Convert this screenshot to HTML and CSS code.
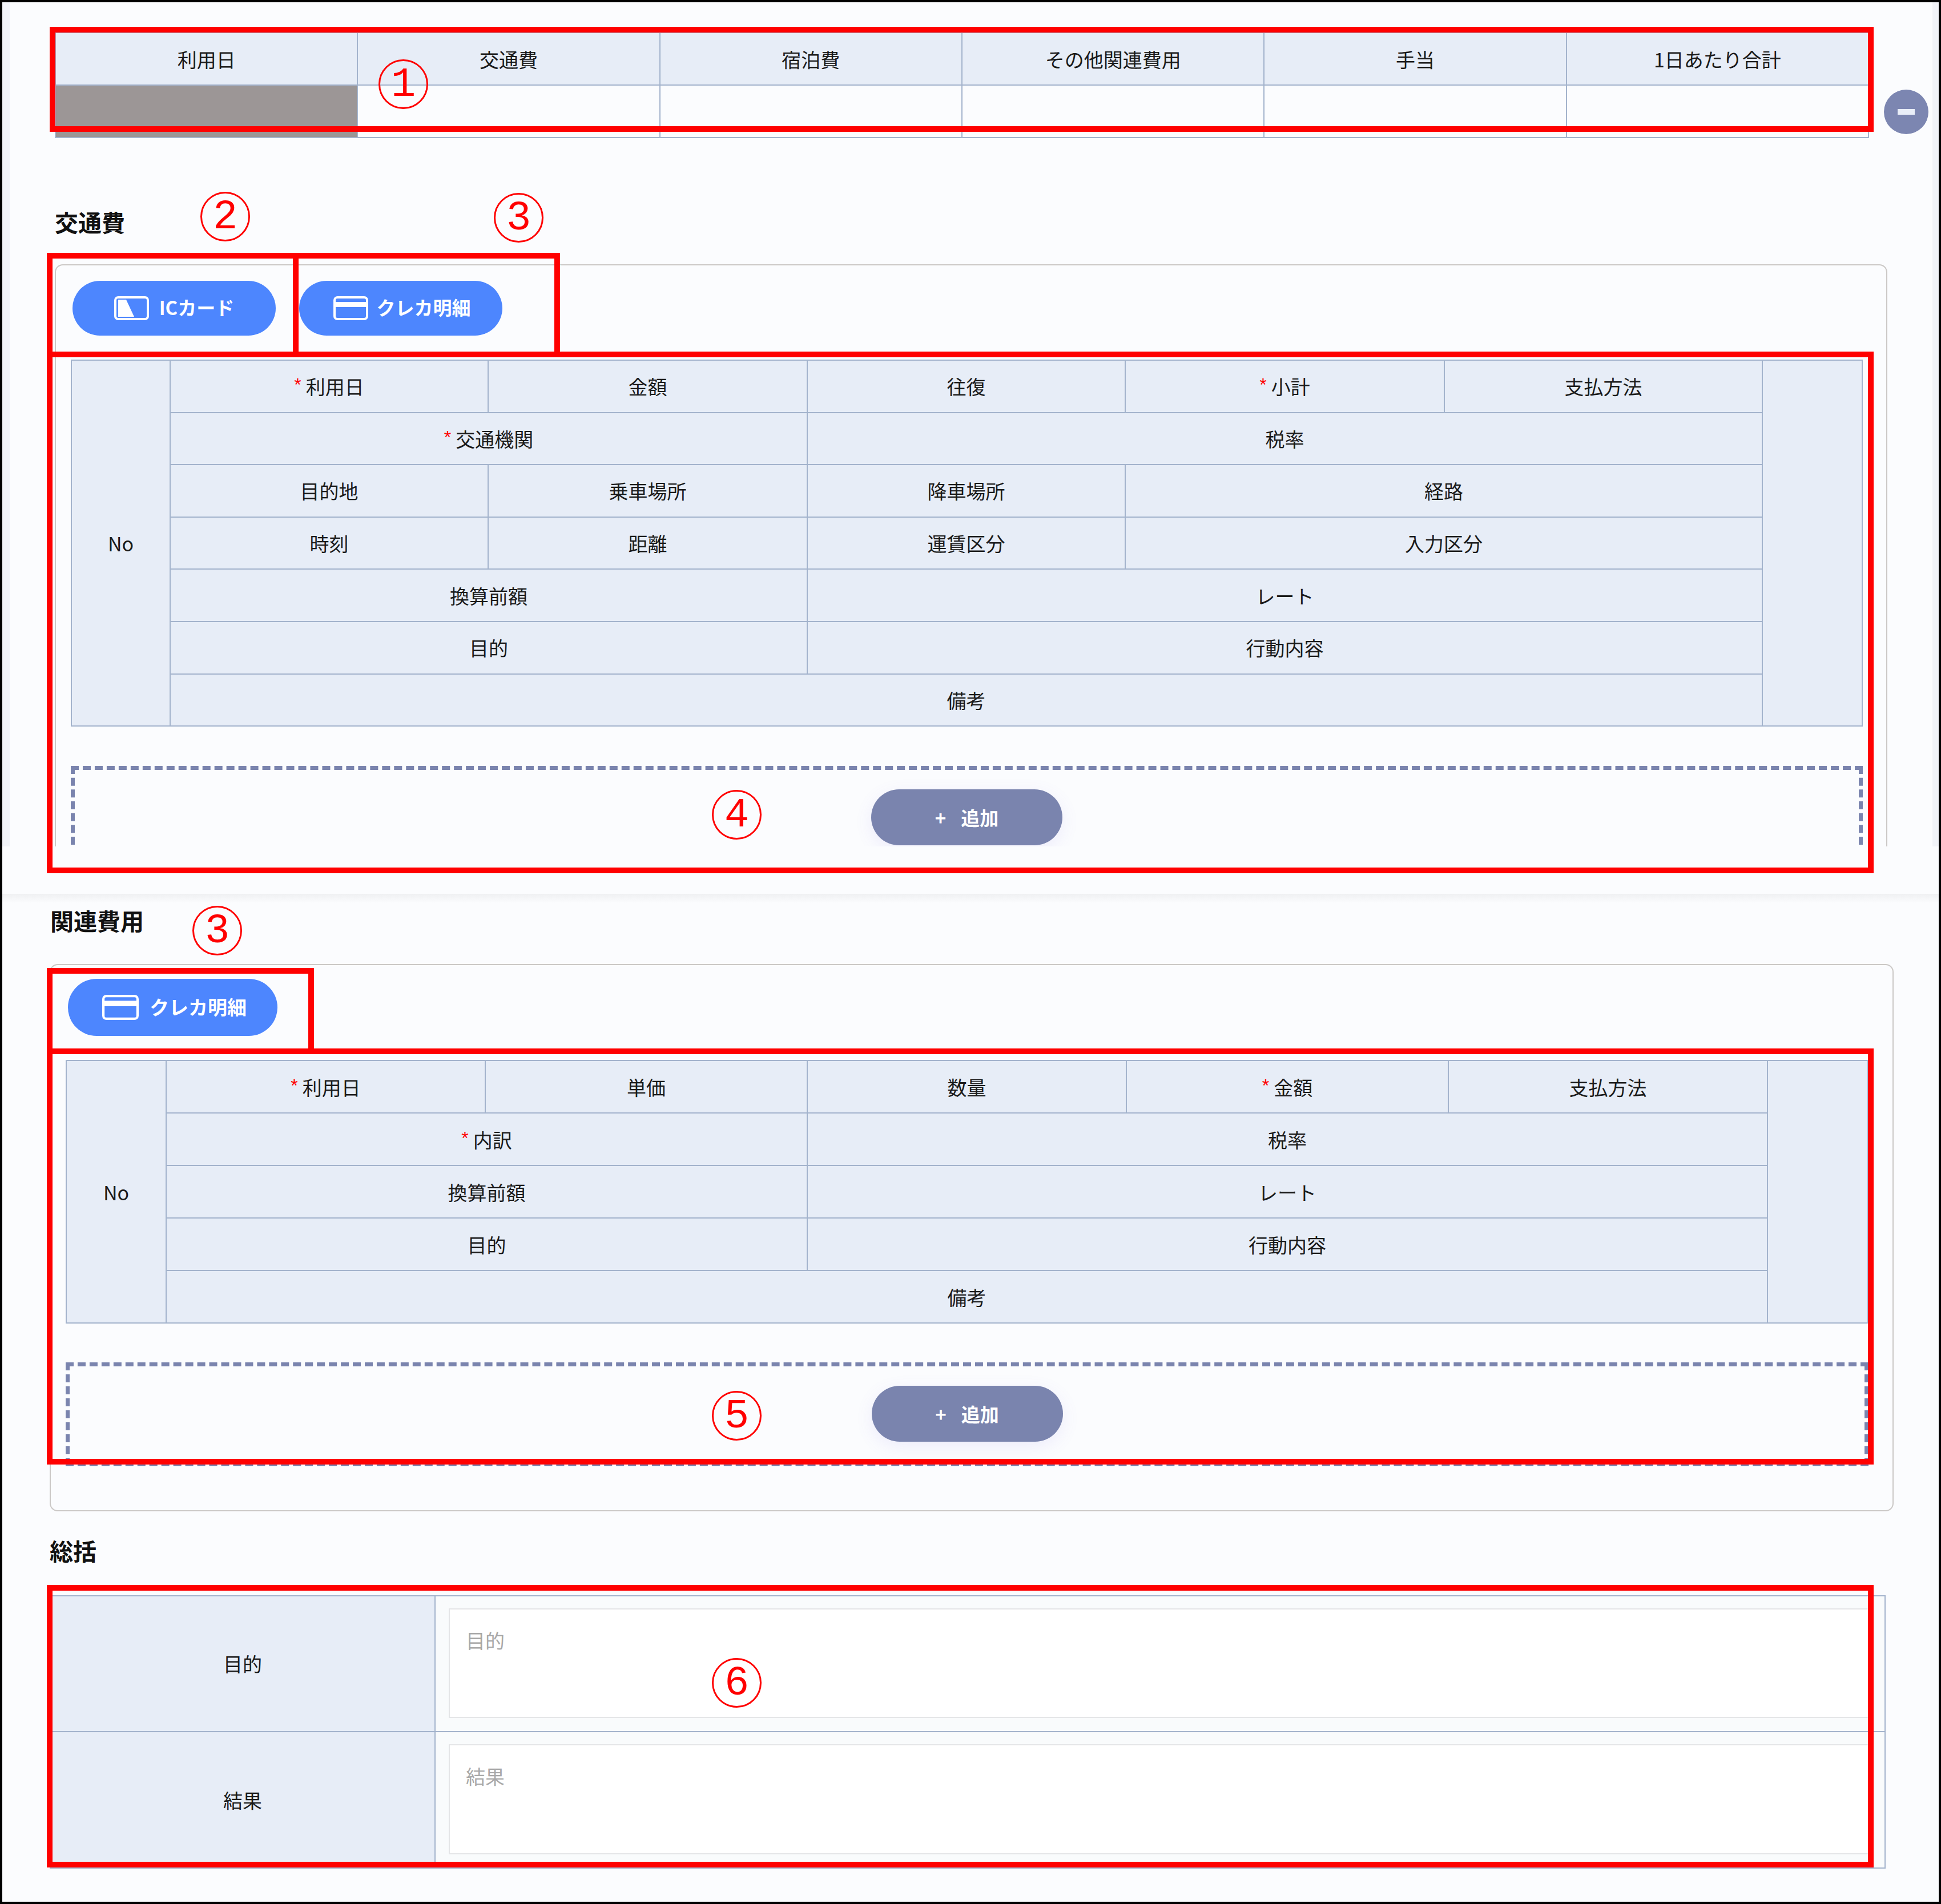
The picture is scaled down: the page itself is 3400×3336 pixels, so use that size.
FILE: index.html
```html
<!DOCTYPE html>
<html lang="ja">
<head>
<meta charset="utf-8">
<title>経費入力</title>
<link rel="stylesheet" href="styles.css">
</head>
<body>
<div class="frame">
  <section class="shot-top">
    <div class="main">
      <div class="summary-row">
        <div class="summary-table">
          <div class="cell">利用日</div>
          <div class="cell">交通費</div>
          <div class="cell">宿泊費</div>
          <div class="cell">その他関連費用</div>
          <div class="cell">手当</div>
          <div class="cell">1日あたり合計</div>
          <div class="cell cell-disabled"></div>
          <div class="cell cell-value"></div>
          <div class="cell cell-value"></div>
          <div class="cell cell-value"></div>
          <div class="cell cell-value"></div>
          <div class="cell cell-value"></div>
        </div>
        <button class="minus-button" type="button" aria-label="削除"><span class="minus-bar"></span></button>
      </div>

      <h2 class="section-title">交通費</h2>
      <div class="panel panel-transport">
        <div class="pill-row">
          <button class="pill" type="button">
            <svg class="pill-icon" viewBox="0 0 61 42" aria-hidden="true"><rect x="2" y="2" width="57" height="38" rx="5" fill="none" stroke="#fff" stroke-width="4"/><path d="M7 6H21L35 36H7Z" fill="#fff"/></svg>
            <span class="pill-text">ICカード</span>
          </button>
          <button class="pill pill-card" type="button">
            <svg class="pill-icon" viewBox="0 0 61 42" aria-hidden="true"><rect x="2" y="2" width="57" height="38" rx="5" fill="none" stroke="#fff" stroke-width="4"/><rect x="2" y="10" width="57" height="9" fill="#fff"/></svg>
            <span class="pill-text">クレカ明細</span>
          </button>
        </div>
        <div class="detail-table detail-transport">
          <div class="cell side rows-7">No</div>
          <div class="cell"><span class="req">*</span>利用日</div>
          <div class="cell">金額</div>
          <div class="cell">往復</div>
          <div class="cell"><span class="req">*</span>小計</div>
          <div class="cell">支払方法</div>
          <div class="cell side rows-7"></div>
          <div class="cell span-2"><span class="req">*</span>交通機関</div>
          <div class="cell span-3">税率</div>
          <div class="cell">目的地</div>
          <div class="cell">乗車場所</div>
          <div class="cell">降車場所</div>
          <div class="cell span-2">経路</div>
          <div class="cell">時刻</div>
          <div class="cell">距離</div>
          <div class="cell">運賃区分</div>
          <div class="cell span-2">入力区分</div>
          <div class="cell span-2">換算前額</div>
          <div class="cell span-3">レート</div>
          <div class="cell span-2">目的</div>
          <div class="cell span-3">行動内容</div>
          <div class="cell span-5">備考</div>
        </div>
        <div class="drop-zone drop-transport">
          <button class="add-button" type="button"><span class="plus">+</span><span>追加</span></button>
        </div>
      </div>
    </div>
  </section>

  <section class="shot-bottom">
    <h2 class="section-title title-related">関連費用</h2>
    <div class="panel panel-related">
      <div class="pill-row">
        <button class="pill pill-large" type="button">
          <svg class="pill-icon" viewBox="0 0 61 42" aria-hidden="true"><rect x="2" y="2" width="57" height="38" rx="5" fill="none" stroke="#fff" stroke-width="4"/><rect x="2" y="10" width="57" height="9" fill="#fff"/></svg>
          <span class="pill-text">クレカ明細</span>
        </button>
      </div>
      <div class="detail-table detail-related">
        <div class="cell side rows-5">No</div>
        <div class="cell"><span class="req">*</span>利用日</div>
        <div class="cell">単価</div>
        <div class="cell">数量</div>
        <div class="cell"><span class="req">*</span>金額</div>
        <div class="cell">支払方法</div>
        <div class="cell side rows-5"></div>
        <div class="cell span-2"><span class="req">*</span>内訳</div>
        <div class="cell span-3">税率</div>
        <div class="cell span-2">換算前額</div>
        <div class="cell span-3">レート</div>
        <div class="cell span-2">目的</div>
        <div class="cell span-3">行動内容</div>
        <div class="cell span-5">備考</div>
      </div>
      <div class="drop-zone drop-related">
        <button class="add-button" type="button"><span class="plus">+</span><span>追加</span></button>
      </div>
    </div>

    <h2 class="section-title title-summary">総括</h2>
    <div class="summary-form">
      <div class="cell form-label">目的</div>
      <div class="cell form-field"><div class="text-box">目的</div></div>
      <div class="cell form-label">結果</div>
      <div class="cell form-field"><div class="text-box">結果</div></div>
    </div>
  </section>

  <div class="annotations">
    <div class="red-box box-1"></div>
    <div class="red-box box-2"></div>
    <div class="red-box box-3"></div>
    <div class="red-box box-4"></div>
    <div class="red-box box-5"></div>
    <div class="red-box box-6"></div>
    <div class="red-box box-7"></div>
    <div class="num num-1">1</div>
    <div class="num num-2">2</div>
    <div class="num num-3">3</div>
    <div class="num num-4">4</div>
    <div class="num num-5">3</div>
    <div class="num num-6">5</div>
    <div class="num num-7">6</div>
  </div>
</div>
</body>
</html>
```

FILE: styles.css
```css
* { box-sizing: border-box; }

html, body { margin: 0; padding: 0; }

body {
  width: 3400px;
  height: 3336px;
  font-family: "Noto Sans CJK JP", "Noto Sans", sans-serif;
  font-size: 34px;
  color: #1a1a1a;
  background: #fbfcfe;
  overflow: hidden;
}

.frame {
  position: relative;
  width: 3400px;
  height: 3336px;
  border: 4px solid #000;
  background: #fbfcfe;
  overflow: hidden;
}

/* upper capture */
.shot-top {
  height: 1479px;
  padding: 0 11px 0 13px;
  background: #f1f3f8;
}

.main {
  height: 100%;
  padding: 52px 0 0 79px;
  background: #fbfcfe;
  overflow: hidden;
}

.summary-row {
  display: flex;
  align-items: flex-start;
  gap: 26px;
}

.summary-table {
  display: grid;
  width: 3178px;
  grid-template-columns: repeat(6, 1fr);
  grid-auto-rows: 92px;
  border-top: 2px solid #a3b3cc;
  border-left: 2px solid #a3b3cc;
}

.cell {
  display: flex;
  align-items: center;
  justify-content: center;
  padding-top: 1px;
  background: #e7edf7;
  border-right: 2px solid #a3b3cc;
  border-bottom: 2px solid #a3b3cc;
  line-height: 1;
  white-space: nowrap;
}

.cell-disabled { background: #9c9696; }
.cell-value { background: #fbfcfe; }

.minus-button {
  display: flex;
  align-items: center;
  justify-content: center;
  flex: none;
  width: 78px;
  height: 78px;
  margin-top: 101px;
  padding: 0;
  border: 0;
  border-radius: 50%;
  background: #7c86b1;
}

.minus-bar {
  width: 30px;
  height: 10px;
  background: #e9eef8;
}

.section-title {
  margin: 116px 0 45px;
  font-size: 41px;
  font-weight: 700;
  line-height: 60px;
  color: #111;
}

.panel {
  border: 2px solid #cbc8c6;
  border-radius: 14px;
  background: #fbfcfe;
}

.panel-transport {
  width: 3210px;
  padding: 27px 41px 0 26px;
}

.pill-row {
  display: flex;
  gap: 41px;
  margin-left: 3px;
}

.pill {
  display: flex;
  align-items: center;
  justify-content: center;
  gap: 18px;
  width: 356px;
  height: 96px;
  padding: 0;
  border: 0;
  border-radius: 48px;
  background: #4d86fe;
  color: #fff;
  font-family: inherit;
  font-size: 33px;
  font-weight: 700;
  line-height: 1;
}

.pill-card {
  gap: 15px;
  padding-left: 4px;
}

.pill-text { padding-bottom: 3px; }

.pill-icon {
  flex: none;
  width: 61px;
  height: 42px;
}

.pill-large {
  gap: 19px;
  width: 367px;
  height: 100px;
  padding-left: 6px;
  border-radius: 50px;
  font-size: 34px;
}

.pill-large .pill-icon {
  width: 64px;
  height: 46px;
}

.detail-table {
  display: grid;
  border-top: 2px solid #a3b3cc;
  border-left: 2px solid #a3b3cc;
}

.detail-transport {
  margin-top: 42px;
  grid-template-columns: 173px 557px 559px 557px 559px 557px 1fr;
  grid-auto-rows: 91.6px;
}

.detail-related {
  margin-top: 42px;
  grid-template-columns: 175px 559px 564px 559px 564px 559px 1fr;
  grid-auto-rows: 92px;
}

.span-2 { grid-column: span 2; }
.span-3 { grid-column: span 3; }
.span-5 { grid-column: span 5; }
.rows-7 { grid-row: span 7; }
.rows-5 { grid-row: span 5; }

.req {
  position: relative;
  top: -3px;
  margin-right: 8px;
  color: #f00;
  font-family: "Liberation Sans", sans-serif;
  font-size: 32px;
}

.drop-zone {
  display: flex;
  justify-content: center;
  border: 7px dashed #7a84ae;
}

.drop-transport {
  height: 200px;
  margin-top: 69px;
  padding-top: 34px;
}

.drop-related {
  height: 182px;
  margin-top: 68px;
  padding-top: 34px;
}

.add-button {
  display: flex;
  align-items: center;
  justify-content: center;
  gap: 26px;
  width: 335px;
  height: 98px;
  padding: 0;
  border: 0;
  border-radius: 49px;
  background: #7a84ae;
  color: #fff;
  font-family: inherit;
  font-size: 33px;
  font-weight: 700;
  line-height: 1;
  box-shadow: 0 8px 30px rgba(122, 100, 230, 0.1);
}

/* lower capture */
.shot-bottom {
  margin-top: 83px;
  padding: 16px 79px 0 83px;
  background: linear-gradient(#eff0f2, #fbfcfe 16px) no-repeat;
  background-size: 100% 16px;
}

.title-related {
  margin: 0 0 47px 1px;
}

.panel-related {
  padding: 24px 42px 77px 26px;
}

.panel-related .pill-row { margin-left: 4px; }

.title-summary {
  margin: 38px 0 49px;
}

.summary-form {
  display: grid;
  width: 3216px;
  grid-template-columns: 674px 1fr;
  grid-template-rows: 237.5px 239px;
  border-top: 2px solid #a3b3cc;
  border-left: 2px solid #a3b3cc;
}

.form-field {
  align-items: stretch;
  justify-content: stretch;
  padding: 21px 23px 23px;
  background: #f9fbfc;
}

.text-box {
  flex: 1;
  padding: 30px 28px;
  border: 2px solid #e4e5e7;
  background: #fff;
  color: #a8a8a8;
  font-size: 34px;
  line-height: 48px;
}

/* annotations drawn over the capture */
.annotations {
  position: absolute;
  top: -4px;
  left: -4px;
  width: 3400px;
  height: 3336px;
  pointer-events: none;
}

.red-box {
  position: absolute;
  border: 10px solid #f00;
}

.box-1 { left: 87px; top: 47px; width: 3195px; height: 184px; }
.box-2 { left: 82px; top: 443px; width: 441px; height: 183px; }
.box-3 { left: 513px; top: 443px; width: 468px; height: 183px; }
.box-4 { left: 82px; top: 616px; width: 3200px; height: 914px; }
.box-5 { left: 82px; top: 1696px; width: 468px; height: 151px; }
.box-6 { left: 82px; top: 1837px; width: 3200px; height: 729px; }
.box-7 { left: 82px; top: 2777px; width: 3200px; height: 495px; }

.num {
  position: absolute;
  display: flex;
  align-items: center;
  justify-content: center;
  width: 87px;
  height: 87px;
  padding-top: 2px;
  border: 3px solid #f00;
  border-radius: 50%;
  color: #f00;
  font-family: "Liberation Mono", monospace;
  font-size: 72px;
  line-height: 1;
}

.num-1 { left: 663px; top: 104px; }
.num-2 { left: 351px; top: 336px; }
.num-3 { left: 865px; top: 338px; }
.num-4 { left: 1247px; top: 1384px; }
.num-5 { left: 337px; top: 1587px; }
.num-6 { left: 1247px; top: 2437px; }
.num-7 { left: 1247px; top: 2905px; }
```
